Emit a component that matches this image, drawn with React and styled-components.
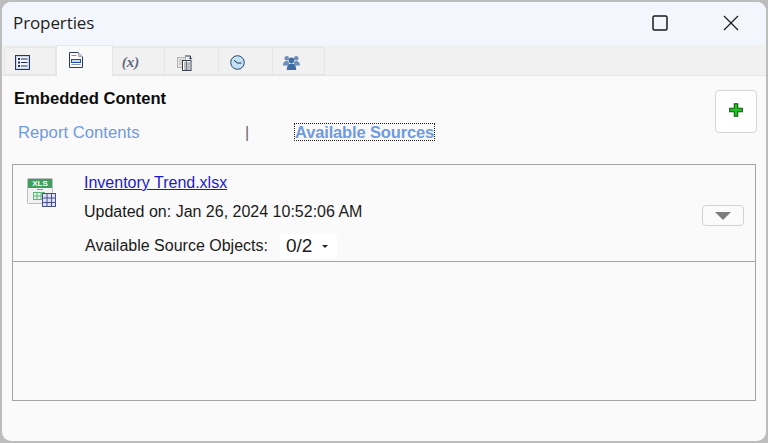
import React from "react";
import styled, { createGlobalStyle } from "styled-components";

const Global = createGlobalStyle`
  html, body { margin: 0; padding: 0; width: 768px; height: 443px; overflow: hidden; background: #bdbdbd; }
  body { font-family: "Liberation Sans", Arial, sans-serif; color: #1a1a1a; }
`;

const Frame = styled.div`
  width: 768px; height: 443px; box-sizing: border-box; padding: 2px;
`;
const Window = styled.div`
  height: 100%; display: flex; flex-direction: column; overflow: hidden;
  border-radius: 9px; background: #fafafa;
`;
const TitleBar = styled.div`
  height: 43px; flex: none; display: flex; align-items: center; padding-left: 11px;
  background: #f3f6fc;
`;
const Title = styled.div`
  font-family: "Open Sans", "Noto Sans", sans-serif; font-size: 17px; color: #222; flex: 1;
  letter-spacing: -0.1px; margin-top: -2px;
`;
const WinButton = styled.div`
  width: 71px; height: 43px; display: flex; align-items: center; justify-content: center;
  padding-bottom: 2px; box-sizing: border-box;
`;
const TabStrip = styled.div`
  height: 30px; flex: none; display: flex; align-items: flex-end; padding-left: 2px;
  background: #f1f1f1; border-bottom: 1px solid #e6e6e6;
`;
const Tab = styled.div`
  box-sizing: border-box; width: ${p => p.$w}px; height: ${p => (p.$active ? 31 : 28)}px;
  margin-bottom: ${p => (p.$active ? -1 : 0)}px;
  display: flex; justify-content: center; align-items: flex-start;
  padding-top: ${p => (p.$active ? 6 : 7)}px;
  padding-right: ${p => p.$pad}px;
  background: ${p => (p.$active ? "#fafafa" : "#f1f1f1")};
  border: 1px solid #e6e6e6; border-bottom: ${p => (p.$active ? "none" : "1px solid #e6e6e6")};
  border-left: ${p => (p.$first || p.$active ? "1px solid #e6e6e6" : "none")};
`;
const VarIcon = styled.span`
  font-family: "Liberation Serif", serif; font-weight: bold; font-style: italic; font-size: 15px;
  line-height: 15px; color: #5f6a7c;
`;
const Body = styled.div`
  flex: 1; display: flex; flex-direction: column; padding: 12px 10px 0 10px; min-height: 0;
`;
const HeadRow = styled.div`
  height: 76px; flex: none; display: flex; justify-content: space-between; align-items: flex-start;
`;
const HeadLeft = styled.div`
  flex: 1; padding-left: 2px;
`;
const Heading = styled.div`
  font-size: 16.6px; font-weight: bold; color: #0c0c0c; line-height: 20px; margin-top: 1px;
`;
const LinkRow = styled.div`
  display: flex; align-items: center; margin-top: 15px; font-size: 16.7px; line-height: 18px; padding-left: 4px;
`;
const PlainLink = styled.span`
  color: #6f9be0; width: 228px;
`;
const Sep = styled.span`
  color: #666; width: 50px; font-size: 16px; margin-left: -1px;
`;
const ActiveLink = styled.span`
  color: #6f9be0; font-weight: bold; outline: 1px dotted #222; font-size: 16.5px; letter-spacing: -0.15px;
  line-height: 16px; margin-top: -2px;
`;
const AddButton = styled.div`
  width: 42px; height: 43px; box-sizing: border-box; margin: 2px -1px 0 0; flex: none;
  display: flex; align-items: center; justify-content: center; padding-bottom: 3px;
  background: #fff; border: 1px solid #d4d4d4; border-radius: 4px;
`;
const Panel = styled.div`
  width: 744px; height: 237px; box-sizing: border-box; flex: none; border: 1px solid #a3a3a3;
  display: flex; flex-direction: column;
`;
const Item = styled.div`
  height: 97px; flex: none; box-sizing: border-box; border-bottom: 1px solid #a3a3a3;
  display: flex;
`;
const FileIcon = styled.div`
  width: 71px; flex: none; padding: 13px 0 0 14px; box-sizing: border-box;
`;
const ItemText = styled.div`
  flex: 1; font-size: 16px; display: flex; flex-direction: column;
`;
const FileLink = styled.a`
  color: #1a1acc; text-decoration: underline; line-height: 18px; margin-top: 9px;
`;
const Updated = styled.div`
  line-height: 18px; margin-top: 11px;
`;
const SourceRow = styled.div`
  display: flex; align-items: center; margin-top: 12px; height: 26px; padding-left: 1px;
`;
const Select = styled.div`
  margin-left: 12px; width: 57px; height: 25px; box-sizing: border-box; background: #fff;
  display: flex; align-items: center; padding-left: 6px; border-radius: 2px; font-size: 19px;
`;
const Caret = styled.span`
  margin-left: 10px; width: 0; height: 0; border-left: 3px solid transparent; border-right: 3px solid transparent;
  border-top: 3px solid #222;
`;
const MenuButton = styled.div`
  width: 42px; height: 21px; box-sizing: border-box; margin: 40px 11px 0 0; flex: none;
  background: #fbfbfb; border: 1px solid #d2d2d2; border-radius: 4px;
  display: flex; align-items: center; justify-content: center;
`;
const DownTriangle = styled.span`
  width: 0; height: 0; border-left: 8px solid transparent; border-right: 8px solid transparent;
  border-top: 8px solid #7d7d7d;
`;

const ListIcon = () => (
  <svg width="15" height="15" viewBox="0 0 15 15">
    <rect x=".5" y=".5" width="14" height="14" fill="#c4d4ef" stroke="#26365f" />
    <rect x="2" y="2" width="11" height="11" fill="#f1f5fc" />
    <g fill="#1f2c4f">
      <rect x="3" y="3" width="2" height="2" /><rect x="6" y="3.5" width="6.5" height="1" />
      <rect x="3" y="6.5" width="2" height="2" /><rect x="6" y="7" width="6.5" height="1" />
      <rect x="3" y="10" width="2" height="2" /><rect x="6" y="10.5" width="6.5" height="1" />
    </g>
  </svg>
);
const DocIcon = () => (
  <svg width="14" height="16" viewBox="0 0 14 16">
    <path d="M.5.5H9.5L13.5 4.5V15.5H.5Z" fill="#fdfdfd" stroke="#2d3a5a" />
    <path d="M9.5.5V4.5H13.5Z" fill="#c3cbdc" stroke="#a3acc0" />
    <path d="M2.5 3.5H7.5" stroke="#8993aa" />
    <rect x="2.5" y="7.5" width="9" height="3" fill="#cbd9f3" stroke="#1f4fa8" />
    <path d="M2.5 12.5H11.5" stroke="#8993aa" />
  </svg>
);
const CopyIcon = () => (
  <svg width="16" height="16" viewBox="0 0 16 16">
    <rect x=".5" y="2.5" width="8" height="10" fill="#e4e4e4" stroke="#b2b2b2" />
    <path d="M2 5H7M2 7H7M2 9H7" stroke="#bdbdbd" />
    <rect x="5.5" y="5.5" width="8.5" height="10" fill="#fff" stroke="#39404f" />
    <path d="M7 8H13M7 10H13M7 12H13M7 14H13M9.5 6V15" stroke="#5a6070" strokeWidth=".8" />
    <path d="M8 1H13.5V4M12.2 2.8L13.5 4.2L14.8 2.8" fill="none" stroke="#2b3142" />
  </svg>
);
const ClockIcon = () => (
  <svg width="15" height="15" viewBox="0 0 15 15">
    <circle cx="7.5" cy="7.5" r="6.8" fill="#c3e2f8" stroke="#28456e" />
    <path d="M4 5.4L7.5 8L11.5 8" fill="none" stroke="#1e2a44" />
  </svg>
);
const UsersIcon = () => (
  <svg width="17" height="15" viewBox="0 0 17 15">
    <g fill="#6d8fb7">
      <circle cx="3.8" cy="3.2" r="2.3" /><circle cx="13.2" cy="3.2" r="2.3" />
      <path d="M0 10.5C0 7 1.8 6 3.8 6S6 7 6 10.5ZM11 10.5C11 7 11.5 6 13.2 6S17 7 17 10.5Z" />
    </g>
    <g fill="#3f6da3">
      <circle cx="8.5" cy="5.4" r="2.8" />
      <path d="M3.8 15C3.8 10.5 5.6 8.7 8.5 8.7S13.2 10.5 13.2 15Z" />
    </g>
  </svg>
);
const PlusIcon = () => (
  <svg width="14" height="14" viewBox="0 0 14 14">
    <path d="M5.3 .7H8.7V5.3H13.3V8.7H8.7V13.3H5.3V8.7H.7V5.3H5.3Z" fill="#22c422" stroke="#0c5a0c" strokeWidth="1.1" />
  </svg>
);
const XlsIcon = () => (
  <svg width="30" height="30" viewBox="0 0 30 30">
    <rect x=".5" y=".5" width="25" height="25" rx="1" fill="#f2f2f2" stroke="#bdbdbd" />
    <rect x="1" y="1" width="24" height="9" fill="#3f9f5d" />
    <text x="13" y="8.2" textAnchor="middle" fontFamily="Liberation Sans" fontWeight="bold" fontSize="8" fill="#fff">XLS</text>
    <rect x="6.5" y="14.5" width="11" height="7" fill="#e2f3e6" stroke="#5fb67b" />
    <path d="M6.5 18H17.5M10 14.5V21.5M14 14.5V21.5M10 11.5H16" stroke="#5fb67b" fill="none" />
    <rect x="15.5" y="15.5" width="13" height="13" fill="#dfe3f5" stroke="#454f8f" />
    <path d="M15.5 20H28.5M15.5 24.5H28.5M20 15.5V28.5M24.5 15.5V28.5" stroke="#454f8f" />
  </svg>
);

export default function App() {
  return (
    <Frame>
      <Global />
      <Window>
        <TitleBar>
          <Title>Properties</Title>
          <WinButton>
            <svg width="16" height="16" viewBox="0 0 16 16"><rect x="1" y="1" width="14" height="14" rx="1.5" fill="none" stroke="#1a1a1a" strokeWidth="1.5" /></svg>
          </WinButton>
          <WinButton>
            <svg width="16" height="16" viewBox="0 0 16 16"><path d="M1 1L15 15M15 1L1 15" stroke="#1a1a1a" strokeWidth="1.2" /></svg>
          </WinButton>
        </TitleBar>
        <TabStrip>
          <Tab $w={52} $first $pad={16}><ListIcon /></Tab>
          <Tab $w={57} $active $pad={17}><DocIcon /></Tab>
          <Tab $w={52} $pad={16}><VarIcon>(x)</VarIcon></Tab>
          <Tab $w={54} $pad={14}><CopyIcon /></Tab>
          <Tab $w={54} $pad={16}><ClockIcon /></Tab>
          <Tab $w={52} $pad={14}><UsersIcon /></Tab>
        </TabStrip>
        <Body>
          <HeadRow>
            <HeadLeft>
              <Heading>Embedded Content</Heading>
              <LinkRow>
                <PlainLink>Report Contents</PlainLink>
                <Sep>|</Sep>
                <ActiveLink>Available Sources</ActiveLink>
              </LinkRow>
            </HeadLeft>
            <AddButton><PlusIcon /></AddButton>
          </HeadRow>
          <Panel>
            <Item>
              <FileIcon><XlsIcon /></FileIcon>
              <ItemText>
                <FileLink>Inventory Trend.xlsx</FileLink>
                <Updated>Updated on: Jan 26, 2024 10:52:06 AM</Updated>
                <SourceRow>
                  Available Source Objects:
                  <Select>0/2<Caret /></Select>
                </SourceRow>
              </ItemText>
              <MenuButton><DownTriangle /></MenuButton>
            </Item>
          </Panel>
        </Body>
      </Window>
    </Frame>
  );
}
